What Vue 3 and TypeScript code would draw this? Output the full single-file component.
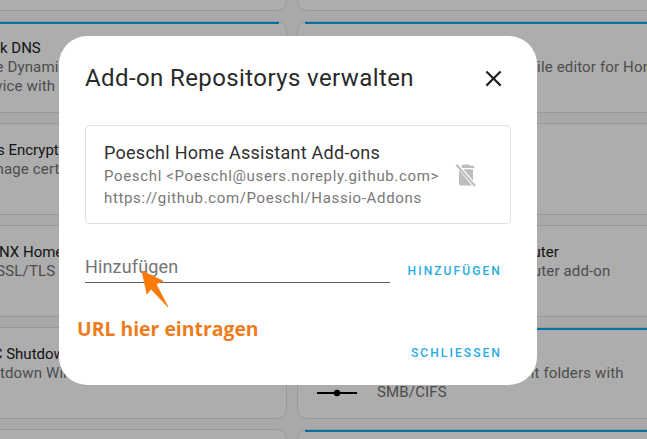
<script setup lang="ts">
// Karten im Hintergrund, Zeile für Zeile
interface AddonCard {
  title?: string
  lines?: string[]
  accent?: boolean
  icon?: boolean
}

const cards: AddonCard[] = [
  {},
  {},
  { title: 'Duck DNS', lines: ['Free Dynamic', 'service with'], accent: true },
  { title: 'File editor', lines: ['Simple browser based file editor for Home Assistant'], accent: true },
  { title: "Let's Encrypt", lines: ['Manage certificates'] },
  {},
  { title: 'NGINX Home', lines: ['An SSL/TLS'] },
  { title: 'Wireless Network IP Router', lines: ['Use the wifi network router add-on'] },
  { title: 'RPC Shutdown', lines: ['Shutdown Windows'] },
  { title: 'Samba share', lines: ['Expose Home Assistant folders with', 'SMB/CIFS'], accent: true, icon: true },
  {},
  { accent: true }
]
</script>

<template>
  <div class="page">
    <div class="cards">
      <div v-for="(card, i) in cards" :key="i" class="card" :class="{ accent: card.accent }">
        <div class="card-slot">
          <svg v-if="card.icon" width="42" height="10" viewBox="0 0 42 10">
            <path d="M1 5h40" stroke="#000" stroke-width="2" />
            <circle cx="21" cy="5" r="3.2" fill="#000" />
          </svg>
        </div>
        <div class="card-text">
          <div v-if="card.title" class="card-title">{{ card.title }}</div>
          <div v-for="line in card.lines" :key="line" class="card-line">{{ line }}</div>
        </div>
      </div>
    </div>

    <div class="scrim">
      <div class="dialog">
        <header class="dialog-head">
          <h2>Add-on Repositorys verwalten</h2>
          <svg class="close" width="27" height="27" viewBox="0 0 24 24">
            <path fill="#212121" d="M19 6.41 17.59 5 12 10.59 6.41 5 5 6.41 10.59 12 5 17.59 6.41 19 12 13.41 17.59 19 19 17.59 13.41 12z" />
          </svg>
        </header>

        <div class="repo">
          <div class="repo-text">
            <div class="repo-name">Poeschl Home Assistant Add-ons</div>
            <div class="repo-meta">Poeschl &lt;Poeschl@users.noreply.github.com&gt;</div>
            <div class="repo-meta">https://github.com/Poeschl/Hassio-Addons</div>
          </div>
          <svg class="trash" width="28" height="28" viewBox="0 0 24 24">
            <path fill="#bdbdbd" d="M15.5 4l-1-1h-5l-1 1H5v2h14V4zM6 7v12c0 1.100.9 2 2 2h8c1.100 0 2-.9 2-2V7z" />
            <path d="M4.600 3.400 19.600 21.400" stroke="#fff" stroke-width="3.400" />
            <path d="M3.800 3.200 19.800 21.600" stroke="#bdbdbd" stroke-width="1.700" />
          </svg>
        </div>

        <div class="add-row">
          <div class="field">Hinzufügen</div>
          <span class="action add-action">HINZUFÜGEN</span>
        </div>

        <div class="hint">URL hier eintragen</div>

        <footer class="dialog-foot">
          <span class="action">SCHLIESSEN</span>
        </footer>

        <svg class="arrow" width="30" height="38" viewBox="0 0 30 38">
          <path fill="#f97a08" stroke="#f97a08" stroke-width="0.800" stroke-linejoin="round" d="M1 0 22 10 15 13 27 36 10 18 6 23z" />
        </svg>
      </div>
    </div>
  </div>
</template>

<style scoped>
.page {
  position: relative;
  width: 647px;
  height: 439px;
  overflow: hidden;
  background: #fafafa;
  font-family: Roboto, "Liberation Sans", sans-serif;
}

.cards {
  display: grid;
  grid-template-columns: 393px 393px;
  grid-auto-rows: 92px;
  gap: 10px;
  margin: -81px 0 0 -106px;
}

.card {
  position: relative;
  display: flex;
  align-items: flex-start;
  gap: 19px;
  padding: 17px 18px 0;
  background: #fff;
  border: 1px solid #e0e0e0;
  border-radius: 10px;
  box-sizing: border-box;
}

/* Die blaue Linie bleibt gerade und läuft nicht in die Ecken */
.card.accent::before {
  content: "";
  position: absolute;
  top: 0;
  left: 7px;
  right: 7px;
  height: 2px;
  background: #03a9f4;
}

.card-slot {
  flex: none;
  width: 42px;
  height: 10px;
  margin-top: 38px;
}

.card-text {
  white-space: nowrap;
}

.card-title {
  font-size: 15px;
  line-height: 19px;
  color: #212121;
}

.card-line {
  font-size: 15px;
  line-height: 19px;
  letter-spacing: 0.15px;
  color: #727272;
}

.scrim {
  position: absolute;
  inset: 0;
  background: rgba(0, 0, 0, 0.32);
}

.dialog {
  position: absolute;
  left: 59px;
  top: 36px;
  width: 478px;
  height: 349px;
  box-sizing: border-box;
  padding: 25px 26px 0;
  background: #fff;
  border-radius: 28px;
  display: flex;
  flex-direction: column;
}

.dialog-head {
  display: flex;
  align-items: center;
  justify-content: space-between;
  height: 34px;
  padding-right: 4px;
}

.dialog-head h2 {
  margin: 0;
  font-size: 24px;
  font-weight: 400;
  letter-spacing: 0.4px;
  color: #2a2a2a;
}

.repo {
  display: flex;
  align-items: center;
  justify-content: space-between;
  height: 99px;
  margin-top: 30px;
  padding: 0 30px 0 18px;
  box-sizing: border-box;
  border: 1px solid #e0e0e0;
  border-radius: 4px;
}

.repo-name {
  font-size: 18px;
  line-height: 24px;
  letter-spacing: 0.27px;
  color: #2f2f2f;
}

.repo-meta {
  font-size: 15px;
  line-height: 22px;
  letter-spacing: 0.65px;
  color: #787878;
}

.add-row {
  display: flex;
  justify-content: space-between;
  margin-top: 20px;
  padding-right: 9px;
}

.field {
  width: 305px;
  height: 39px;
  box-sizing: border-box;
  padding-top: 12px;
  border-bottom: 1px solid #616161;
  font-size: 18px;
  letter-spacing: 0.15px;
  color: #757575;
}

.action {
  font-size: 12px;
  font-weight: 500;
  letter-spacing: 2.1px;
  color: #29abe2;
}

.add-action {
  align-self: flex-end;
  margin-bottom: 5px;
}

.hint {
  margin: 32px 0 0 -8px;
  font-family: "Open Sans", sans-serif;
  font-size: 19.4px;
  font-weight: 700;
  color: #ed7d1c;
}

.dialog-foot {
  display: flex;
  justify-content: flex-end;
  margin-top: 4px;
  padding-right: 9px;
}

.arrow {
  position: absolute;
  left: 82px;
  top: 235px;
}
</style>

<style>
html, body {
  overflow: hidden;
}
</style>
